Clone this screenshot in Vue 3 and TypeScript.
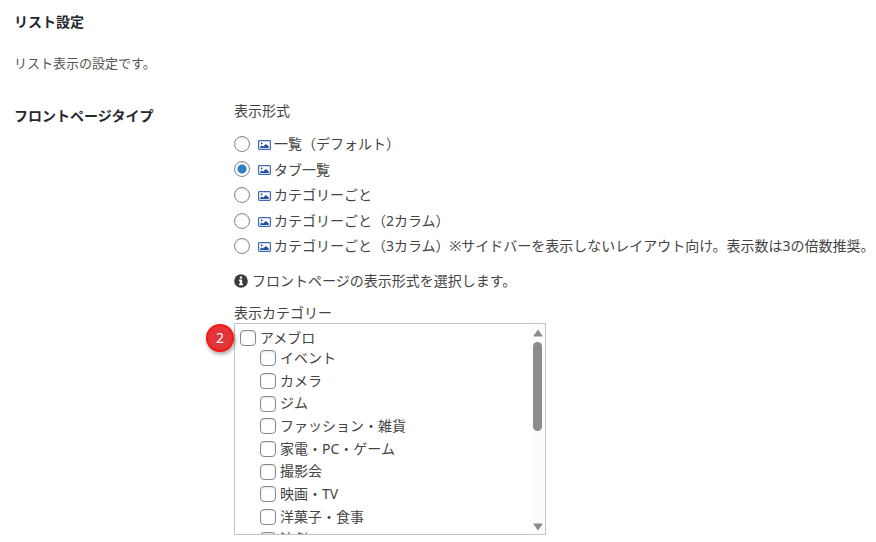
<script setup lang="ts">
import { ref } from 'vue'

interface Option {
  value: string
  label: string
}

const frontTypes: Option[] = [
  { value: 'index', label: '一覧（デフォルト）' },
  { value: 'tab', label: 'タブ一覧' },
  { value: 'category', label: 'カテゴリーごと' },
  { value: 'category-2', label: 'カテゴリーごと（2カラム）' },
  {
    value: 'category-3',
    label: 'カテゴリーごと（3カラム）※サイドバーを表示しないレイアウト向け。表示数は3の倍数推奨。',
  },
]

const childCategories: string[] = [
  'イベント',
  'カメラ',
  'ジム',
  'ファッション・雑貨',
  '家電・PC・ゲーム',
  '撮影会',
  '映画・TV',
  '洋菓子・食事',
  '演劇',
]

const selectedType = ref<string>('tab')
const selectedCategories = ref<string[]>([])
</script>

<template>
  <main class="settings">
    <h2 class="heading">リスト設定</h2>
    <p class="lead">リスト表示の設定です。</p>

    <div class="row">
      <h3 class="row-title">フロントページタイプ</h3>
      <div class="row-body">
        <div id="type-label" class="field-label">表示形式</div>
        <div class="options" role="radiogroup" aria-labelledby="type-label">
          <label v-for="item in frontTypes" :key="item.value" class="option">
            <input v-model="selectedType" class="radio" type="radio" name="front-type" :value="item.value" />
            <svg class="image-icon" viewBox="0 0 13 10" aria-hidden="true">
              <rect x="0.6" y="0.6" width="11.8" height="8.8" rx="0.8" fill="#fff" stroke="#3f6bb3" stroke-width="1.2" />
              <rect x="2.8" y="2.6" width="1.8" height="1.6" rx="0.6" fill="#2551a0" />
              <path d="M2.3 8V6.5L3.7 5.6l1.5.8L7.8 3.9l2.9 2.3V8z" fill="#2551a0" />
            </svg>
            <span>{{ item.label }}</span>
          </label>
        </div>

        <p class="tip">
          <svg class="info-icon" viewBox="0 0 14 14" aria-hidden="true">
            <circle cx="7" cy="7" r="6.8" fill="#3c3c3c" />
            <path d="M5.9 2.5h2.2v2H5.9zM5 5.6h3.1v4H9v1.6H5V9.6h.9V7.2H5z" fill="#fff" />
          </svg>
          <span>フロントページの表示形式を選択します。</span>
        </p>

        <div id="category-label" class="field-label">表示カテゴリー</div>
        <div class="category-wrap">
          <span class="badge">2</span>
          <div class="category-box" role="group" aria-labelledby="category-label">
            <div class="category-list">
              <label class="category parent">
                <input v-model="selectedCategories" class="check" type="checkbox" value="アメブロ" />
                <span>アメブロ</span>
              </label>
              <div class="children">
                <label v-for="name in childCategories" :key="name" class="category">
                  <input v-model="selectedCategories" class="check" type="checkbox" :value="name" />
                  <span>{{ name }}</span>
                </label>
              </div>
            </div>
            <div class="scrollbar" aria-hidden="true">
              <svg class="arrow" viewBox="0 0 10 8"><path d="M5 .5 9.3 6.6Q9.4 7.5 8.8 7.5H1.2Q.6 7.5.7 6.6z" fill="#8b8b8b" /></svg>
              <div class="track"><div class="thumb"></div></div>
              <svg class="arrow" viewBox="0 0 10 8"><path d="M5 7.5 9.3 1.4Q9.4.5 8.8.5H1.2Q.6.5.7 1.4z" fill="#8b8b8b" /></svg>
            </div>
          </div>
        </div>
      </div>
    </div>
  </main>
</template>

<style>
body {
  margin: 0;
  background: #fff;
}
</style>

<style scoped>
.settings {
  padding: 12px 0 7px 14px;
  color: #444;
  font: 14px/20px "Noto Sans", "Noto Sans CJK JP", sans-serif;
}

.heading,
.row-title {
  margin: 0;
  color: #23282d;
  font-size: 14px;
  font-weight: 600;
}

.lead {
  margin: 21px 0 0;
  color: #555;
  font-size: 13px;
}

.row {
  display: grid;
  grid-template-columns: 220px minmax(0, 1fr);
  margin-top: 28px;
}

.row-title {
  margin-top: 5px;
}

.options {
  display: flex;
  flex-direction: column;
  margin-top: 10px;
}

.option {
  display: flex;
  align-items: center;
  line-height: 1.83;
  white-space: nowrap;
}

.radio,
.check {
  appearance: none;
  box-sizing: border-box;
  flex: none;
  width: 16px;
  height: 16px;
  margin: 0;
  border: 1px solid #7e8993;
  background: #fff;
  box-shadow: inset 0 1px 2px rgb(0 0 0 / 10%);
}

.radio {
  border-radius: 50%;
}

.radio:checked {
  background: radial-gradient(circle, #2e7fc4 0 4px, #fff 5px);
}

.check {
  border-radius: 4px;
}

.check:checked {
  background: #2e7fc4;
}

.image-icon {
  flex: none;
  width: 13px;
  height: 10px;
  margin: 2px 3px 0 8px;
}

.tip {
  display: flex;
  align-items: center;
  gap: 4px;
  margin: 12px 0;
}

.info-icon {
  width: 14px;
  height: 14px;
}

.category-wrap {
  position: relative;
  width: 312px;
  max-width: 100%;
}

.category-box {
  box-sizing: border-box;
  display: flex;
  height: 212px;
  border: 1px solid #c3c4c7;
}

.category-list {
  flex: 1;
  overflow: hidden;
  padding: 4px 5px 0;
}

.category {
  display: flex;
  align-items: center;
  gap: 4px;
  line-height: 1.62;
}

.parent {
  line-height: 20px;
}

.children {
  margin-top: -1px;
  padding-left: 20px;
}

.scrollbar {
  display: flex;
  flex-direction: column;
  align-items: center;
  gap: 5px;
  width: 15px;
  padding: 5px 0 3px;
  box-sizing: border-box;
  background: #fcfcfc;
}

.arrow {
  width: 10px;
  height: 8px;
}

.track {
  flex: 1;
}

.thumb {
  width: 9px;
  height: 89px;
  border-radius: 5px;
  background: #8b8b8b;
}

.badge {
  position: absolute;
  top: 1px;
  left: -28px;
  box-sizing: border-box;
  width: 28px;
  height: 28px;
  border: 2px solid #fb1518;
  border-radius: 50%;
  background: #e2353a;
  box-shadow: 1px 2px 4px rgb(0 0 0 / 40%);
  color: #fff;
  line-height: 24px;
  text-align: center;
}
</style>
